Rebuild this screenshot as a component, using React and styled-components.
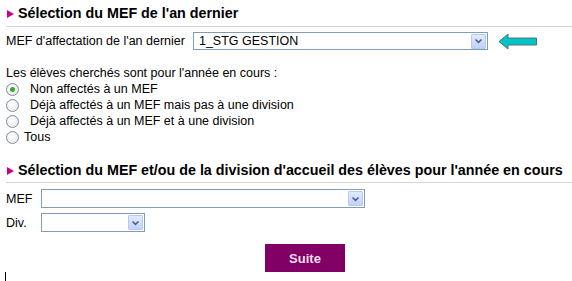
import React from "react";
import styled, { createGlobalStyle } from "styled-components";

const GlobalStyle = createGlobalStyle`
  body {
    margin: 0;
    background: #ffffff;
    font-family: "Liberation Sans", Arial, sans-serif;
    font-size: 12.5px;
    color: #000000;
  }
`;

const Page = styled.div`
  padding: 5px 0 0 6px;
  width: 566px;
  height: 276px;
  position: relative;
`;

const Title = styled.h2`
  margin: ${(p) => (p.$first ? "0" : "17px")} 0 0 0;
  padding: 0 0 ${(p) => (p.$first ? 4 : 3)}px 0;
  font-size: 14.3px;
  line-height: 17px;
  font-weight: bold;
  border-bottom: 1px solid #d4d4d4;
  display: flex;
  align-items: center;
  gap: 4px;
`;

const Bullet = styled.span`
  width: 0;
  height: 0;
  border-top: 4px solid transparent;
  border-bottom: 4px solid transparent;
  border-left: 7px solid #cc0088;
  margin-left: 1px;
`;

const Row = styled.div`
  display: flex;
  align-items: center;
  margin-top: ${(p) => p.$top || 0}px;
  line-height: 16px;
`;

const Label = styled.span`
  width: ${(p) => (p.$width ? `${p.$width}px` : "auto")};
  margin-right: ${(p) => (p.$gap ? p.$gap : 0)}px;
  flex-shrink: 0;
`;

const SelectBox = styled.div`
  box-sizing: border-box;
  width: ${(p) => p.$width}px;
  height: ${(p) => p.$height || 19}px;
  border: 1px solid #7f9db9;
  background: #ffffff;
  display: flex;
  align-items: center;
  justify-content: space-between;
  padding: 1px 1px 1px 5px;
`;

const SelectValue = styled.span`
  font-size: 12.5px;
`;

const DropButton = styled.span`
  width: 15px;
  height: 15px;
  box-sizing: border-box;
  border: 1px solid #b9c9ef;
  border-radius: 1px;
  background: linear-gradient(#e1eafd, #c0d2fa);
  display: flex;
  align-items: center;
  justify-content: center;
`;

const ArrowWrap = styled.span`
  display: flex;
  margin-left: 10px;
`;

const Intro = styled.div`
  margin-top: 15px;
  line-height: 16px;
`;

const RadioRow = styled.label`
  display: flex;
  align-items: center;
  line-height: 16px;
  gap: ${(p) => p.$gap}px;
`;

const Radio = styled.span`
  box-sizing: border-box;
  width: 13px;
  height: 13px;
  border-radius: 50%;
  border: 1px solid #7f8c98;
  background: radial-gradient(circle at 40% 40%, #ffffff, #e4e4e4);
  display: flex;
  align-items: center;
  justify-content: center;

  &::after {
    content: "";
    width: 5px;
    height: 5px;
    border-radius: 50%;
    background: ${(p) => (p.$checked ? "#3aa53a" : "transparent")};
  }
`;

const ButtonRow = styled.div`
  display: flex;
  padding-left: 259px;
  margin-top: 12px;
`;

const Button = styled.button`
  width: 80px;
  height: 28px;
  border: none;
  background: #820066;
  color: #f4dff0;
  font-family: "Liberation Sans", Arial, sans-serif;
  font-weight: bold;
  font-size: 13px;
`;

const Tick = styled.span`
  position: absolute;
  left: 5px;
  bottom: 0;
  width: 1px;
  height: 9px;
  background: #000000;
`;

const Chevron = () => (
  <svg width="9" height="6" viewBox="0 0 9 6">
    <path d="M1.5 1.5 L4.5 4.3 L7.5 1.5" fill="none" stroke="#4d6185" strokeWidth="1.6" />
  </svg>
);

const Select = ({ width, height, value }) => (
  <SelectBox $width={width} $height={height}>
    <SelectValue>{value}</SelectValue>
    <DropButton>
      <Chevron />
    </DropButton>
  </SelectBox>
);

const CyanArrow = () => (
  <svg width="40" height="17" viewBox="0 0 40 17">
    <polygon
      points="1,8.5 10,1 10,5 38.5,5 38.5,12 10,12 10,16"
      fill="#00c4c8"
      stroke="#5a7070"
      strokeWidth="1"
    />
  </svg>
);

const options = [
  { label: "Non affectés à un MEF", checked: true, gap: 11 },
  { label: "Déjà affectés à un MEF mais pas à une division", gap: 11 },
  { label: "Déjà affectés à un MEF et à une division", gap: 11 },
  { label: "Tous", gap: 5 },
];

export default function App() {
  return (
    <>
      <GlobalStyle />
      <Page>
        <Title $first>
          <Bullet />
          Sélection du MEF de l'an dernier
        </Title>
        <Row $top={5}>
          <Label $gap={8}>MEF d'affectation de l'an dernier</Label>
          <Select width={295} height={18} value="1_STG GESTION" />
          <ArrowWrap>
            <CyanArrow />
          </ArrowWrap>
        </Row>
        <Intro>Les élèves cherchés sont pour l'année en cours :</Intro>
        {options.map((o) => (
          <RadioRow key={o.label} $gap={o.gap}>
            <Radio $checked={o.checked} />
            {o.label}
          </RadioRow>
        ))}
        <Title>
          <Bullet />
          Sélection du MEF et/ou de la division d'accueil des élèves pour l'année en cours
        </Title>
        <Row $top={6}>
          <Label $width={35}>MEF</Label>
          <Select width={324} />
        </Row>
        <Row $top={5}>
          <Label $width={35}>Div.</Label>
          <Select width={104} />
        </Row>
        <ButtonRow>
          <Button>Suite</Button>
        </ButtonRow>
        <Tick />
      </Page>
    </>
  );
}
